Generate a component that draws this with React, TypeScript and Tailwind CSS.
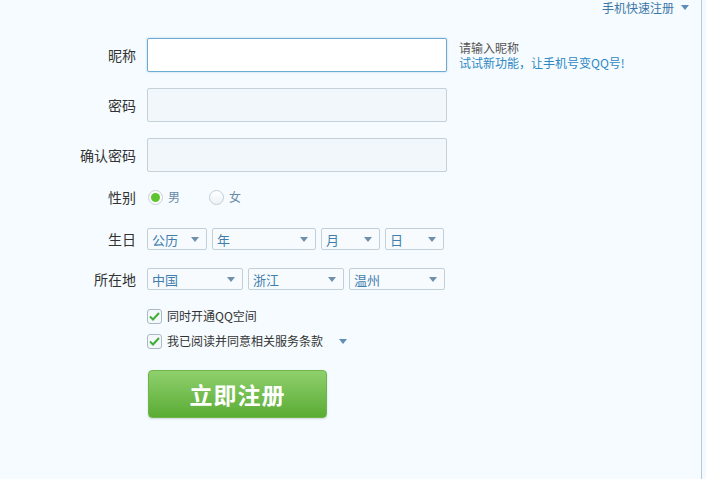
import React from "react";

const font = { fontFamily: '"Noto Sans CJK SC", "Noto Sans", sans-serif' };

function Arrow({ color = "#6f8fab" }: { color?: string }) {
  return (
    <svg width="8" height="5" viewBox="0 0 8 5">
      <path d="M0 0 L8 0 L4 5 Z" fill={color} />
    </svg>
  );
}

function Select({ w, text }: { w: string; text: string }) {
  return (
    <div
      className={`${w} h-[22px] flex items-center justify-between pl-[4px] pr-[7px] bg-[#f7fbfe] border border-[#c3d0da] rounded-[2px] text-[13px] text-[#3f7eae]`}
    >
      <span className="leading-none">{text}</span>
      <Arrow />
    </div>
  );
}

function Label({ children }: { children: React.ReactNode }) {
  return (
    <div className="w-[136px] text-right text-[14px] text-[#333] leading-none pr-0">{children}</div>
  );
}

function Check({ text, extra }: { text: string; extra?: boolean }) {
  return (
    <div className="flex items-center h-[16px]">
      <div className="w-[15px] h-[15px] rounded-[3px] border border-[#aab9c6] bg-[#f4f8fb] flex items-center justify-center">
        <svg width="11" height="9" viewBox="0 0 11 9">
          <path d="M1 4.5 L4 7.5 L10 1" stroke="#3fae3a" strokeWidth="2" fill="none" />
        </svg>
      </div>
      <span className="ml-[5px] text-[12px] text-[#333] leading-none">{text}</span>
      {extra && (
        <span className="ml-[16px] mt-[1px]">
          <Arrow color="#5d8db8" />
        </span>
      )}
    </div>
  );
}

export default function App() {
  return (
    <div className="w-[706px] h-[479px] bg-[#f3f9fd] flex" style={font}>
      <div className="w-[702px] h-full bg-[#f5fbfe] border-r border-[#b7c9d8] flex flex-col relative">
        <div className="absolute right-[12px] top-0 flex items-center h-[15px] text-[12px] text-[#3a77a8]">
          <span className="leading-none">手机快速注册</span>
          <span className="ml-[7px]">
            <Arrow color="#5d8db8" />
          </span>
        </div>

        <div className="flex items-center mt-[38px] h-[34px]">
          <Label>昵称</Label>
          <div className="ml-[11px] w-[300px] h-[34px] bg-white border border-[#6daad4] rounded-[2px] shadow-[0_0_2px_rgba(100,160,210,0.5)]" />
          <div className="ml-[12px] flex flex-col text-[12px] -mt-[1px]">
            <span className="text-[#555] leading-[15px] h-[15px] block">请输入昵称</span>
            <span className="text-[#2d88c4] leading-[15px] h-[15px] block">试试新功能，让手机号变QQ号!</span>
          </div>
        </div>

        <div className="flex items-center mt-[16px] h-[34px]">
          <Label>密码</Label>
          <div className="ml-[11px] w-[300px] h-[34px] bg-[#f2f7fb] border border-[#c5d0d8] rounded-[2px]" />
        </div>

        <div className="flex items-center mt-[16px] h-[34px]">
          <Label>确认密码</Label>
          <div className="ml-[11px] w-[300px] h-[34px] bg-[#f2f7fb] border border-[#c5d0d8] rounded-[2px]" />
        </div>

        <div className="flex items-center mt-[15px] h-[20px]">
          <Label>性别</Label>
          <div className="ml-[12px] flex items-center">
            <div className="w-[15px] h-[15px] rounded-full border border-[#c6ced6] bg-white flex items-center justify-center">
              <div className="w-[9px] h-[9px] rounded-full bg-[#5cc42e]" />
            </div>
            <span className="ml-[5px] text-[12px] text-[#6a8aa8] leading-none">男</span>
            <div className="ml-[29px] w-[15px] h-[15px] rounded-full border border-[#c6ced6] bg-gradient-to-b from-white to-[#edf2f6]" />
            <span className="ml-[5px] text-[12px] text-[#6a8aa8] leading-none">女</span>
          </div>
        </div>

        <div className="flex items-center mt-[21px] h-[22px]">
          <Label>生日</Label>
          <div className="ml-[11px] flex gap-[5px]">
            <Select w="w-[60px]" text="公历" />
            <Select w="w-[104px]" text="年" />
            <Select w="w-[59px]" text="月" />
            <Select w="w-[59px]" text="日" />
          </div>
        </div>

        <div className="flex items-center mt-[18px] h-[22px]">
          <Label>所在地</Label>
          <div className="ml-[11px] flex gap-[5px]">
            <Select w="w-[96px]" text="中国" />
            <Select w="w-[96px]" text="浙江" />
            <Select w="w-[96px]" text="温州" />
          </div>
        </div>

        <div className="ml-[147px] mt-[18px] flex flex-col gap-[9px]">
          <Check text="同时开通QQ空间" />
          <Check text="我已阅读并同意相关服务条款" extra />
        </div>

        <div className="ml-[148px] mt-[21px] w-[179px] h-[48px] rounded-[4px] border border-[#6fb64a] bg-gradient-to-b from-[#8fd06c] to-[#5aac33] shadow-[0_1px_2px_rgba(0,0,0,0.15)] flex items-center justify-center">
          <span className="text-white text-[23px] font-bold leading-none tracking-[1px]">立即注册</span>
        </div>
      </div>
    </div>
  );
}
